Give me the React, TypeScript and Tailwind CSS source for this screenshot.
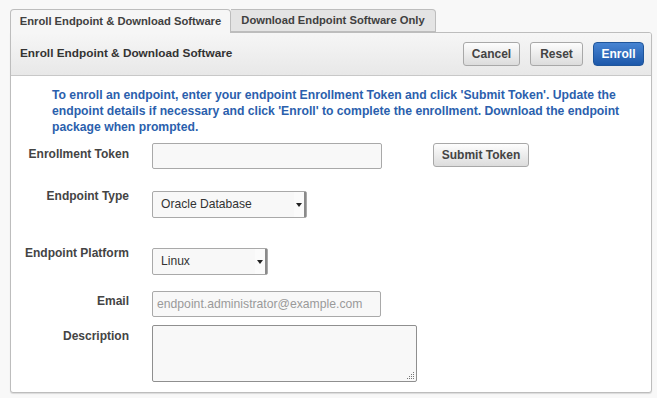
import React from "react";

const Arrow = () => (
  <div className="absolute right-0 top-0 bottom-0 w-[12px] flex items-center justify-center border-r-2 border-r-[#8a8a8a] bg-[#fbfbfb]">
    <svg width="6" height="4" viewBox="0 0 6 4"><path d="M0 0 L6 0 L3 4 Z" fill="#222" /></svg>
  </div>
);

const Label = ({ children, cls }: { children: React.ReactNode; cls: string }) => (
  <div className={`w-[118px] text-right font-bold text-[#444] text-[12px] leading-[14px] ${cls}`}>{children}</div>
);

export default function App() {
  return (
    <div className="w-[657px] h-[398px] bg-[#f8f8f8] pt-[9px] pl-[10px] pr-[5px] font-['Liberation_Sans',Arial,sans-serif]">
      {/* Tabs */}
      <div className="flex h-[24px] relative z-10">
        <div className="w-[221px] h-[24px] border border-b-0 border-[#bdbdbd] rounded-t-[4px] bg-[#f6f6f6] flex items-center justify-center text-[11.2px] font-bold text-[#404040]">
          Enroll Endpoint &amp; Download Software
        </div>
        <div className="w-[205px] h-[23px] border border-l-0 border-[#bdbdbd] rounded-tr-[4px] bg-[#e4e4e4] flex items-center justify-center text-[11.2px] font-bold text-[#404040]">
          Download Endpoint Software Only
        </div>
      </div>
      {/* Panel */}
      <div className="-mt-px w-[642px] h-[361px] border border-[#bdbdbd] rounded-b-[3px] rounded-tr-[3px] bg-white shadow-[0_1px_1px_rgba(0,0,0,0.12)] overflow-hidden">
        <div className="h-[43px] bg-gradient-to-b from-[#f6f6f6] to-[#e8e8e8] border-b border-[#c8c8c8] flex items-center pl-[9px] pr-[7px]">
          <div className="text-[11.8px] font-bold text-[#333] flex-1">Enroll Endpoint &amp; Download Software</div>
          <div className="flex gap-[10px]">
            <button className="w-[57px] h-[24px] rounded-[3px] border border-[#a8a8a8] bg-gradient-to-b from-[#fdfdfd] to-[#dcdcdc] text-[12px] font-bold text-[#444]">Cancel</button>
            <button className="w-[53px] h-[24px] rounded-[3px] border border-[#a8a8a8] bg-gradient-to-b from-[#fdfdfd] to-[#dcdcdc] text-[12px] font-bold text-[#444]">Reset</button>
            <button className="w-[51px] h-[24px] rounded-[4px] border border-[#1f559a] bg-gradient-to-b from-[#4784d2] to-[#1c58aa] text-[12px] font-bold text-white">Enroll</button>
          </div>
        </div>
        <div className="ml-[41px] w-[580px] pt-[11px] text-[12.2px] leading-[16px] font-bold text-[#2b5fad]">
          To enroll an endpoint, enter your endpoint Enrollment Token and click 'Submit Token'. Update the endpoint details if necessary and click 'Enroll' to complete the enrollment. Download the endpoint package when prompted.
        </div>
        <div className="mt-[8px]">
          {/* Token */}
          <div className="flex items-start h-[26px]">
            <Label cls="pt-[4px]">Enrollment Token</Label>
            <div className="ml-[23px] w-[230px] h-[26px] border border-[#a9a9a9] rounded-[2px] bg-[#f8f8f8]" />
            <button className="ml-[51px] w-[96px] h-[24px] rounded-[3px] border border-[#a8a8a8] bg-gradient-to-b from-[#fdfdfd] to-[#dcdcdc] text-[12px] font-bold text-[#444]">Submit Token</button>
          </div>
          {/* Type */}
          <div className="flex items-start mt-[22px] h-[27px]">
            <Label cls="-mt-[2px]">Endpoint Type</Label>
            <div className="relative ml-[23px] w-[155px] h-[27px] border border-[#a9a9a9] rounded-[2px] bg-[#f8f8f8] flex items-center pl-[8px] text-[12.1px] text-[#333]">
              Oracle Database
              <Arrow />
            </div>
          </div>
          {/* Platform */}
          <div className="flex items-start mt-[30px] h-[27px]">
            <Label cls="-mt-[2px]">Endpoint Platform</Label>
            <div className="relative ml-[23px] w-[116px] h-[27px] border border-[#a9a9a9] rounded-[2px] bg-[#f8f8f8] flex items-center pl-[8px] text-[12.1px] text-[#333]">
              Linux
              <Arrow />
            </div>
          </div>
          {/* Email */}
          <div className="flex items-start mt-[16px] h-[26px]">
            <Label cls="pt-[3px]">Email</Label>
            <div className="ml-[23px] w-[229px] h-[26px] border border-[#a9a9a9] rounded-[2px] bg-[#f8f8f8] flex items-center pl-[4px] text-[12.2px] text-[#9a9a9a]">
              endpoint.administrator@example.com
            </div>
          </div>
          {/* Description */}
          <div className="flex items-start mt-[8px]">
            <Label cls="pt-[4px]">Description</Label>
            <div className="relative ml-[23px] w-[265px] h-[57px] border border-[#8f8f8f] rounded-[2px] bg-[#f8f8f8]">
              <svg className="absolute right-[1px] bottom-[1px]" width="10" height="10" viewBox="0 0 10 10">
                <g fill="#777">
                  <rect x="8" y="2" width="1" height="1" />
                  <rect x="6" y="4" width="1" height="1" /><rect x="8" y="4" width="1" height="1" />
                  <rect x="4" y="6" width="1" height="1" /><rect x="6" y="6" width="1" height="1" /><rect x="8" y="6" width="1" height="1" />
                  <rect x="2" y="8" width="1" height="1" /><rect x="4" y="8" width="1" height="1" /><rect x="6" y="8" width="1" height="1" /><rect x="8" y="8" width="1" height="1" />
                </g>
              </svg>
            </div>
          </div>
        </div>
      </div>
    </div>
  );
}
